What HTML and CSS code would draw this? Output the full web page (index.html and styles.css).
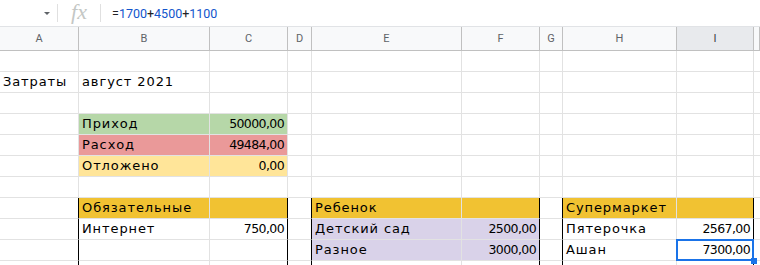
FILE: index.html
```html
<!DOCTYPE html>
<html lang="ru">

<head>
    <meta charset="UTF-8">
    <meta name="viewport" content="width=device-width, initial-scale=1.0">
    <title>Затраты</title>
    <link rel="stylesheet" href="styles.css">
</head>

<body>
    <div class="formula-bar">
        <div class="name-box"><em class="arrow"></em></div>
        <span class="sep"></span>
        <div class="fx">fx</div>
        <span class="sep"></span>
        <div class="formula">=<b>1700</b>+<b>4500</b>+<b>1100</b></div>
    </div>

    <div class="sheet">
        <div class="row heads">
            <div>A</div><div>B</div><div>C</div><div>D</div><div>E</div>
            <div>F</div><div>G</div><div>H</div><div class="active">I</div><div></div>
        </div>

        <!-- 1 -->
        <div class="row">
            <div></div><div></div><div></div><div></div><div></div>
            <div></div><div></div><div></div><div></div><div></div>
        </div>
        <!-- 2 -->
        <div class="row">
            <div>Затраты</div><div>август 2021</div><div></div><div></div><div></div>
            <div></div><div></div><div></div><div></div><div></div>
        </div>
        <!-- 3 -->
        <div class="row">
            <div></div><div></div><div></div><div></div><div></div>
            <div></div><div></div><div></div><div></div><div></div>
        </div>
        <!-- 4 -->
        <div class="row">
            <div></div><div class="green">Приход</div><div class="green num">50000,00</div><div></div><div></div>
            <div></div><div></div><div></div><div></div><div></div>
        </div>
        <!-- 5 -->
        <div class="row">
            <div></div><div class="red">Расход</div><div class="red num">49484,00</div><div></div><div></div>
            <div></div><div></div><div></div><div></div><div></div>
        </div>
        <!-- 6 -->
        <div class="row">
            <div></div><div class="yellow">Отложено</div><div class="yellow num">0,00</div><div></div><div></div>
            <div></div><div></div><div></div><div></div><div></div>
        </div>
        <!-- 7 -->
        <div class="row">
            <div></div><div></div><div></div><div></div><div></div>
            <div></div><div></div><div></div><div></div><div></div>
        </div>
        <!-- 8 -->
        <div class="row">
            <div class="rb"></div><div class="orange">Обязательные</div><div class="orange rb"></div><div class="rb"></div><div class="orange">Ребенок</div>
            <div class="orange rb"></div><div class="rb"></div><div class="orange">Супермаркет</div><div class="orange rb"></div><div></div>
        </div>
        <!-- 9 -->
        <div class="row">
            <div class="rb"></div><div>Интернет</div><div class="num rb">750,00</div><div class="rb"></div><div class="lilac">Детский сад</div>
            <div class="lilac num rb">2500,00</div><div class="rb"></div><div>Пятерочка</div><div class="num rb">2567,00</div><div></div>
        </div>
        <!-- 10 -->
        <div class="row">
            <div class="rb"></div><div></div><div class="rb"></div><div class="rb"></div><div class="lilac">Разное</div>
            <div class="lilac num rb">3000,00</div><div class="rb"></div><div>Ашан</div><div class="num rb selected">7300,00<em class="handle"></em></div><div></div>
        </div>
        <!-- 11 (обрезана снизу) -->
        <div class="row last">
            <div class="rb"></div><div></div><div class="rb"></div><div class="rb"></div><div></div>
            <div class="rb"></div><div class="rb"></div><div></div><div class="rb"></div><div></div>
        </div>
    </div>
</body>

</html>
```

FILE: styles.css
```css
* {
    box-sizing: border-box;
}

body {
    margin: 0;
    width: 760px;
    height: 265px;
    overflow: hidden;
    background: #fff;
    font-family: "DejaVu Sans", "Noto Sans", sans-serif;
}

.formula-bar {
    display: flex;
    align-items: center;
    height: 27px;
    border-bottom: 1px solid #e1e3e6;
}

.formula-bar .name-box {
    display: flex;
    justify-content: flex-end;
    align-items: center;
    width: 57px;
    padding-right: 7px;
}

.formula-bar .arrow {
    display: block;
    border-left: 3px solid transparent;
    border-right: 3px solid transparent;
    border-top: 3px solid #5f6368;
}

.formula-bar .sep {
    width: 1px;
    height: 18px;
    background: #e0e0e0;
}

.formula-bar .fx {
    width: 42px;
    text-align: center;
    font-family: "Liberation Serif", serif;
    font-style: italic;
    font-size: 22px;
    color: #c4c7c5;
    line-height: 1;
    margin-top: -2px;
}

.formula-bar .formula {
    padding-left: 11px;
    font-family: Roboto, "Liberation Sans", sans-serif;
    font-size: 12.5px;
    color: #202124;
}

.formula-bar .formula b {
    font-weight: 400;
    color: #1155cc;
}

.row {
    display: grid;
    grid-template-columns: 79px 131px 78px 24px 150px 78px 23px 114px 77px 1fr;
    height: 21px;
}

.row.last {
    height: 5px;
}

.row.last > div {
    border-bottom: none;
}

.row > div {
    position: relative;
    display: flex;
    align-items: flex-end;
    padding: 0 3px 3px;
    border-right: 1px solid #e2e2e2;
    border-bottom: 1px solid #e2e2e2;
    font-size: 13px;
    letter-spacing: 0.9px;
    color: #000;
    white-space: nowrap;
}

.row.heads {
    height: 24px;
}

.row.heads > div {
    align-items: center;
    justify-content: center;
    padding: 0;
    background: #f8f9fa;
    border-right-color: #c0c0c0;
    border-bottom-color: #c0c0c0;
    font-family: Roboto, "Liberation Sans", sans-serif;
    font-size: 11px;
    letter-spacing: 0;
    color: #5f6368;
}

.row.heads > div.active {
    background: #e8eaed;
    color: #3c4043;
}

.row > div.num {
    justify-content: flex-end;
    font-size: 12.5px;
    letter-spacing: -0.6px;
    padding-right: 3px;
}

.row > div.green {
    background: #b6d7a8;
}

.row > div.red {
    background: #ea9999;
}

.row > div.yellow {
    background: #ffe599;
}

.row > div.orange {
    background: #f1c232;
}

.row > div.lilac {
    background: #d9d2e9;
}

.row > div.rb {
    border-right-color: #000;
}

/* активная ячейка */
.row > div.selected::after {
    content: "";
    position: absolute;
    top: -1px;
    left: -1px;
    right: -1px;
    bottom: -1px;
    border: 2px solid #1a73e8;
}

.row > div.selected .handle {
    position: absolute;
    right: -4px;
    bottom: -4px;
    width: 6px;
    height: 6px;
    background: #1a73e8;
    z-index: 1;
}
```
